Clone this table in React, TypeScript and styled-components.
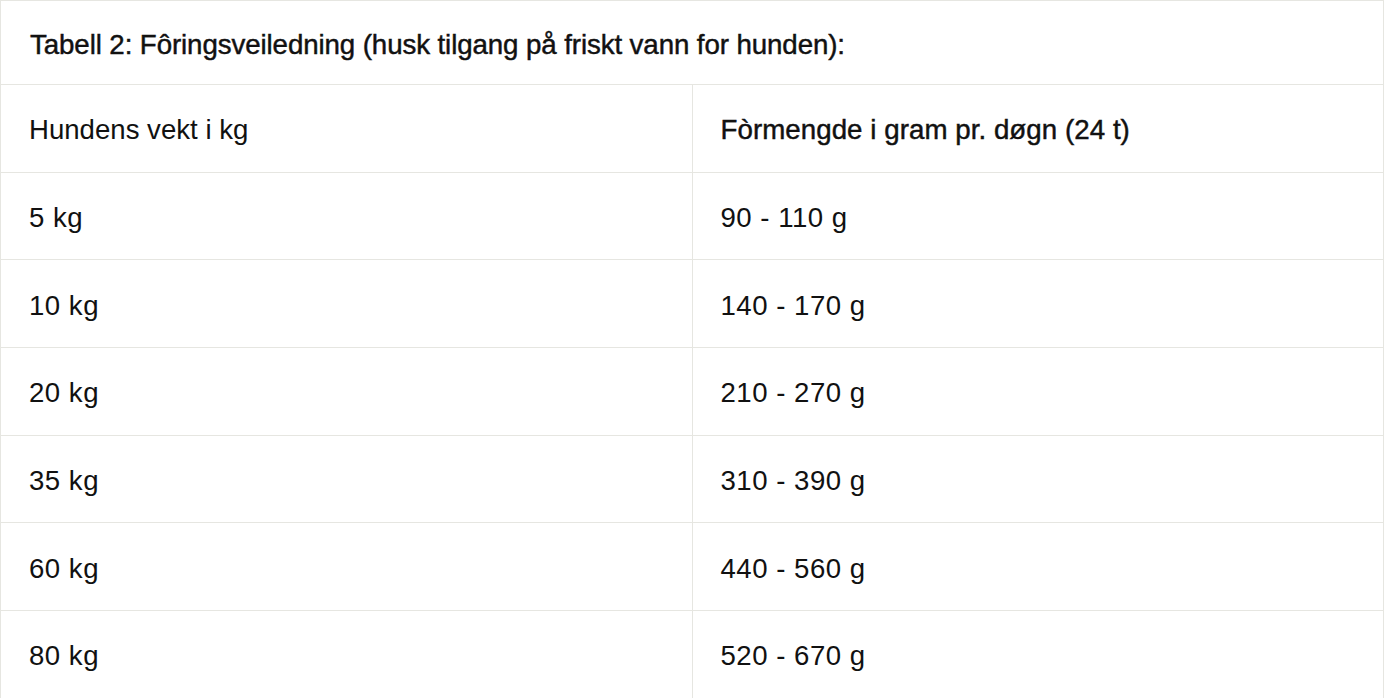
import styled, { createGlobalStyle } from 'styled-components';

const rows = [
  ['5 kg', '90 - 110 g'],
  ['10 kg', '140 - 170 g'],
  ['20 kg', '210 - 270 g'],
  ['35 kg', '310 - 390 g'],
  ['60 kg', '440 - 560 g'],
  ['80 kg', '520 - 670 g'],
];

const GlobalStyle = createGlobalStyle`
  body {
    margin: 0;
    background: #ffffff;
    font-family: "Liberation Sans", Arial, sans-serif;
    color: #111111;
  }
`;

const Table = styled.table`
  width: 1384px;
  border-collapse: collapse;
  table-layout: fixed;
  font-size: 27.6px;
`;

const Caption = styled.th`
  height: 79px;
  padding: 4px 29px 0;
  text-align: left;
  font-weight: 400;
  font-size: 27.7px;
  letter-spacing: -0.1px;
  -webkit-text-stroke: 0.45px #111;
  border: 1px solid #e6e6e1;
`;

const Cell = styled.td<{ $strong?: boolean; $numeric?: boolean }>`
  height: 82.7px;
  padding: 4px 28px 0;
  text-align: left;
  vertical-align: middle;
  border: 1px solid #e6e6e1;
  white-space: nowrap;
  ${props => props.$numeric && `
    letter-spacing: 0.5px;
  `};
  ${props => props.$strong && `
    -webkit-text-stroke: 0.45px #111;
    font-size: 27.7px;
    letter-spacing: 0.05px;
  `};
`;

function App() {
  return (
    <>
      <GlobalStyle />
      <Table>
        <thead>
          <tr>
            <Caption colSpan={2}>
              Tabell 2: Fôringsveiledning (husk tilgang på friskt vann for hunden):
            </Caption>
          </tr>
        </thead>
        <tbody>
          <tr>
            <Cell>Hundens vekt i kg</Cell>
            <Cell $strong>Fòrmengde i gram pr. døgn (24 t)</Cell>
          </tr>
          {rows.map(([weight, amount]) => (
            <tr key={weight}>
              <Cell $numeric>{weight}</Cell>
              <Cell $numeric>{amount}</Cell>
            </tr>
          ))}
        </tbody>
      </Table>
    </>
  );
}

export default App;
